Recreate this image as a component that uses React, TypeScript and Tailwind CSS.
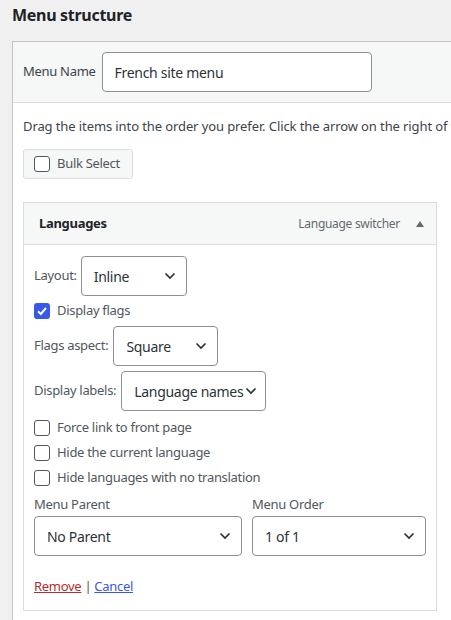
import React from "react";

function Chevron() {
  return (
    <svg width="12" height="8" viewBox="0 0 12 8" className="shrink-0">
      <path d="M1.5 1.5 L6 6 L10.5 1.5" fill="none" stroke="#2c3338" strokeWidth="1.7" />
    </svg>
  );
}

function Select({ value, className }: { value: string; className: string }) {
  return (
    <div
      className={`h-[40px] flex items-center justify-between border border-[#8c8f94] rounded-[4px] bg-white pl-[12px] pr-[10px] text-[14px] text-[#2c3338] whitespace-nowrap ${className}`}
    >
      <span>{value}</span>
      <Chevron />
    </div>
  );
}

function Checkbox({ checked, label }: { checked?: boolean; label: string }) {
  return (
    <label className="flex items-center gap-[7px] h-[16px] text-[13px] text-[#50575e]">
      {checked ? (
        <span className="w-[16px] h-[16px] rounded-[3px] bg-[#3858e9] flex items-center justify-center">
          <svg width="12" height="12" viewBox="0 0 12 12">
            <path d="M2 6.2 L4.8 9 L10 3" fill="none" stroke="white" strokeWidth="2" />
          </svg>
        </span>
      ) : (
        <span className="w-[16px] h-[16px] rounded-[3px] border border-[#50575e] bg-white" />
      )}
      {label}
    </label>
  );
}

export default function App() {
  return (
    <div
      className="w-[451px] h-[620px] overflow-hidden bg-[#f0f0f1] text-[#3c434a] tracking-[-0.3px]"
      style={{ fontFamily: '"Noto Sans", sans-serif' }}
    >
      <h2 className="h-[41px] pl-[12px] pt-[3px] text-[16px] font-bold text-[#1d2327]">Menu structure</h2>
      <div className="ml-[12px] w-[600px] border border-[#c3c4c7] bg-white min-h-[600px]">
        <div className="bg-[#f6f7f7] border-b border-[#dcdcde] pl-[10px] pt-[10px] pb-[10px] flex items-center gap-[6px]">
          <span className="text-[13px] text-[#3c434a]">Menu Name</span>
          <div className="w-[270px] h-[40px] border border-[#8c8f94] rounded-[4px] bg-white flex items-center pl-[12px] text-[14px] text-[#2c3338]">
            French site menu
          </div>
        </div>
        <div className="pl-[10px] pt-[13px]">
          <p className="text-[13px] leading-[20px] whitespace-nowrap text-[#3c434a] tracking-[-0.1px]">
            Drag the items into the order you prefer. Click the arrow on the right of the item to reveal additional configuration options.
          </p>
          <button className="mt-[13px] h-[30px] w-[110px] flex items-center gap-[7px] pl-[10px] bg-[#f6f7f7] border border-[#dcdcde] rounded-[3px] text-[13px] text-[#50575e]">
            <span className="w-[16px] h-[16px] rounded-[3px] border border-[#50575e] bg-white" />
            Bulk Select
          </button>
          <div className="mt-[23px] w-[414px] border border-[#dcdcde]">
            <div className="h-[42px] bg-[#f6f7f7] border-b border-[#dcdcde] flex items-center justify-between pl-[15px] pr-[12px]">
              <span className="text-[13px] font-bold text-[#1d2327]">Languages</span>
              <span className="flex items-center gap-[16px] text-[12px] text-[#646970]">
                Language switcher
                <svg width="8" height="6" viewBox="0 0 8 6">
                  <path d="M0 6 L4 0 L8 6 Z" fill="#646970" />
                </svg>
              </span>
            </div>
            <div className="pl-[10px] pr-[10px] pt-[11px] pb-[14px] flex flex-col">
              <div className="flex items-center gap-[4px]">
                <span className="text-[13px] text-[#50575e]">Layout:</span>
                <Select value="Inline" className="w-[106px]" />
              </div>
              <div className="mt-[7px]">
                <Checkbox checked label="Display flags" />
              </div>
              <div className="mt-[7px] flex items-center gap-[5px]">
                <span className="text-[13px] text-[#50575e]">Flags aspect:</span>
                <Select value="Square" className="w-[105px]" />
              </div>
              <div className="mt-[5px] flex items-center gap-[5px]">
                <span className="text-[13px] text-[#50575e]">Display labels:</span>
                <Select value="Language names" className="w-[145px] !pr-[8px]" />
              </div>
              <div className="mt-[9px] flex flex-col gap-[9px]">
                <Checkbox label="Force link to front page" />
                <Checkbox label="Hide the current language" />
                <Checkbox label="Hide languages with no translation" />
              </div>
              <div className="mt-[8px] flex gap-[10px]">
                <div className="w-[208px] flex flex-col">
                  <span className="text-[13px] leading-[20px] text-[#50575e]">Menu Parent</span>
                  <Select value="No Parent" className="mt-[2px] w-full" />
                </div>
                <div className="w-[174px] flex flex-col">
                  <span className="text-[13px] leading-[20px] text-[#50575e]">Menu Order</span>
                  <Select value="1 of 1" className="mt-[2px] w-full" />
                </div>
              </div>
              <div className="mt-[20px] text-[13px] leading-[20px] text-[#50575e]">
                <a className="text-[#b32d2e] underline">Remove</a> | <a className="text-[#3858e9] underline">Cancel</a>
              </div>
            </div>
          </div>
        </div>
      </div>
    </div>
  );
}
